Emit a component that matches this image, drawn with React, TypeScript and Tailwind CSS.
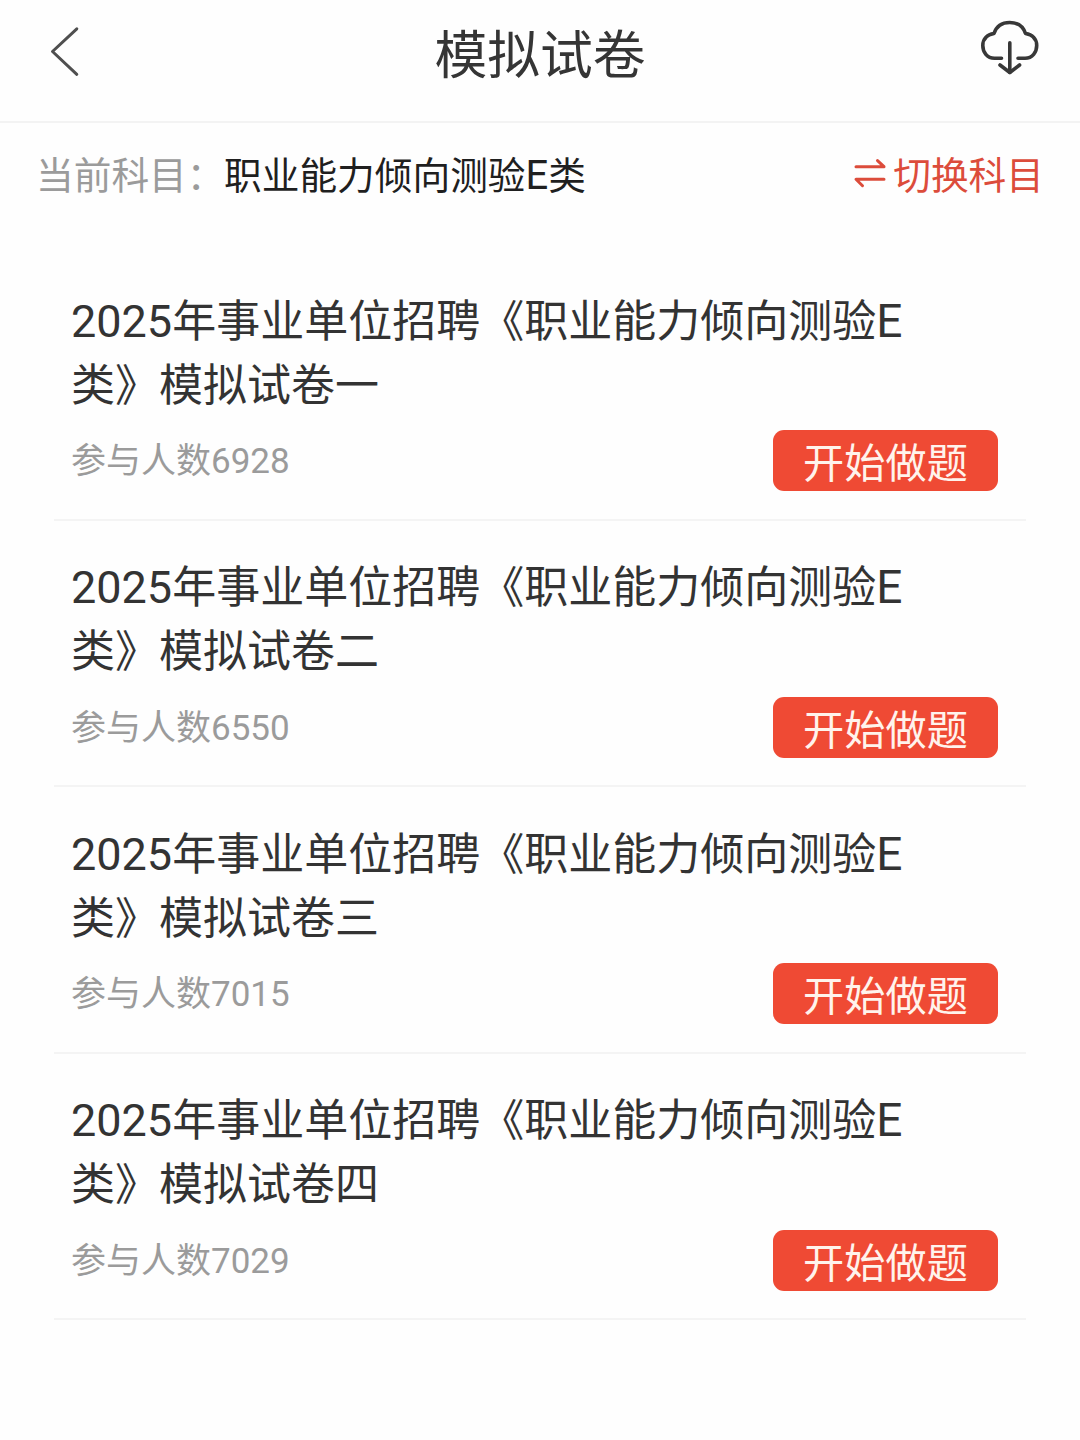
interface Paper {
  index: string;
  count: number;
}

const subject = '职业能力倾向测验';

const papers: Paper[] = [
  { index: '一', count: 6928 },
  { index: '二', count: 6550 },
  { index: '三', count: 7015 },
  { index: '四', count: 7029 },
];

function BackIcon() {
  return (
    <svg width="32" height="52" viewBox="0 0 32 52" fill="none" stroke="#4f4f4f" strokeWidth="3" strokeLinecap="round" strokeLinejoin="round">
      <path d="M28.8 2.8 L4.5 25.5 L28.8 48.3" />
    </svg>
  );
}

function CloudDownloadIcon() {
  return (
    <svg width="60" height="56" viewBox="0 0 60 56" fill="none" stroke="#383838" strokeWidth="3.6" strokeLinecap="round" strokeLinejoin="round">
      <path d="M21.5 38.2 H14.5 C7 38.2 2.8 32 2.8 25.5 C2.8 19 7 14.5 14 13.5 C16.5 6 22.5 2.5 29.7 2.5 C37 2.5 43 6 45.5 13.5 C52.5 14.5 56.7 19 56.7 25.5 C56.7 32 52.5 38.2 45 38.2 H38" />
      <path d="M29.8 22.8 V52.5" />
      <path d="M20 45 L29.8 52.5 L39.6 45" />
    </svg>
  );
}

function SwitchIcon() {
  return (
    <svg className="mb-[4px]" width="34" height="34" viewBox="0 0 34 34" fill="none" stroke="#dc4c3b" strokeWidth="3" strokeLinecap="round" strokeLinejoin="round">
      <path d="M3 9.7 H31 L24.5 3.6" />
      <path d="M31 22.3 H3 L9.5 28.7" />
    </svg>
  );
}

function PaperItem({ paper }: { paper: Paper }) {
  return (
    <li className="h-[266.5px] border-b-2 border-[#f4f4f4] pl-[17px] pr-[28px] pt-[35.5px]">
      <h2 className="w-[860px] text-[44px] leading-[64px] text-[#333333]">
        <span className="text-[45px] leading-none">2025</span>
        年事业单位招聘《职业能力倾向测验
        <span className="text-[46px] leading-none">E</span>
        <br />
        类》模拟试卷{paper.index}
      </h2>
      <div className="mt-[12.5px] flex items-start justify-between">
        <span className="pt-[1px] text-[35px] leading-[61px] text-[#9b9b9b]">参与人数{paper.count}</span>
        <button className="h-[61px] w-[225px] rounded-[11px] bg-[#ef4a34] pt-[4px] text-[41.2px] leading-[61px] text-[#fff3ec]">
          开始做题
        </button>
      </div>
    </li>
  );
}

export default function App() {
  return (
    <div className="h-[1440px] w-[1080px] overflow-hidden bg-[#fefefe] font-[Roboto,'Noto_Sans_CJK_SC',sans-serif]">
      {/* 顶部导航 */}
      <header className="flex h-[122.5px] items-start justify-between border-b-2 border-[#f3f3f3] pl-[48px] pr-[40px]">
        <div className="flex w-[52px] pt-[26px]">
          <BackIcon />
        </div>
        <h1 className="pt-[16px] text-[52.8px] leading-[80px] text-[#353535]">模拟试卷</h1>
        <div className="flex w-[60px] pt-[20px]">
          <CloudDownloadIcon />
        </div>
      </header>

      {/* 当前科目 */}
      <section className="flex h-[131.5px] items-start justify-between pl-[36px] pr-[36px] pt-[23.5px] text-[37.7px] leading-[60px]">
        <p className="flex text-[#1f1f1f]">
          <span className="w-[188px] whitespace-nowrap text-[#9b9b9b]">当前科目：</span>
          <span>
            {subject}
            <span className="text-[40px] leading-none">E</span>类
          </span>
        </p>
        <button className="flex items-center gap-[6px] text-[#dc4c3b]">
          <SwitchIcon />
          切换科目
        </button>
      </section>

      <ul className="mx-[54px]">
        {papers.map((paper) => (
          <PaperItem key={paper.index} paper={paper} />
        ))}
      </ul>
    </div>
  );
}
